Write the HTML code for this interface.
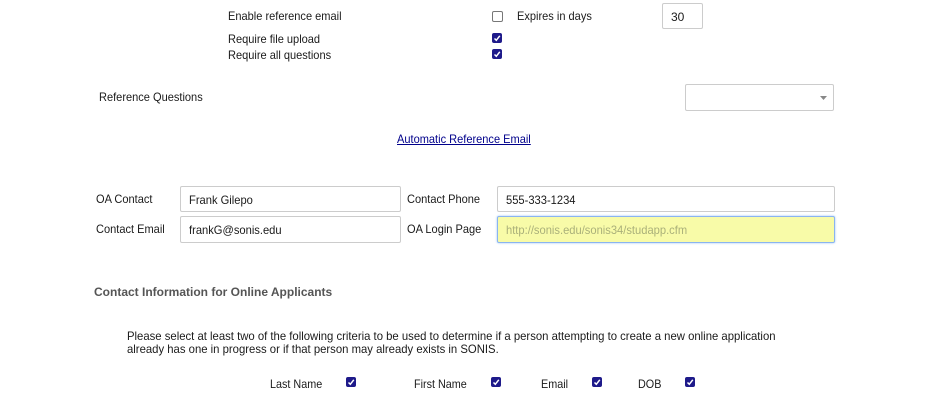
<!DOCTYPE html>
<html><head><style>
body{margin:0;width:936px;height:402px;background:#fff;font-family:"Liberation Sans",Arial,sans-serif;font-size:12px;color:#1a1a1a;position:relative;overflow:hidden}
.a{position:absolute;white-space:nowrap;line-height:14px}
.cb{position:absolute;width:10px;height:10px;background:#1e1a8a;border-radius:2px}
.cb svg{position:absolute;left:1px;top:1px}
.ucb{position:absolute;width:9px;height:9px;border:1px solid #777;border-radius:2px;background:#fff}
.in{position:absolute;border:1px solid #ccc;border-radius:2px;background:#fff;box-sizing:border-box;padding-left:8px;line-height:26px}
.in span{display:inline-block;transform-origin:left center;transform:scaleX(0.93)}
.c{transform-origin:left top;transform:scaleX(0.92)}
.p{transform-origin:left top;transform:scaleX(0.943)}
.b{transform-origin:left top;transform:scaleX(0.9)}
</style></head><body>
<div class="a c" style="left:228px;top:9px">Enable reference email</div>
<div class="ucb" style="left:492px;top:11px"></div>
<div class="a c" style="left:517px;top:9px">Expires in days</div>
<div class="in" style="left:662px;top:3px;width:41px;height:26px">30</div>
<div class="a c" style="left:228px;top:32px">Require file upload</div>
<div class="cb" style="left:492px;top:33px"><svg width="8" height="8"><path d="M1.5 4.5L3.3 6.3L6.8 1.8" stroke="#fff" stroke-width="1.5" fill="none"/></svg></div>
<div class="a c" style="left:228px;top:48px">Require all questions</div>
<div class="cb" style="left:492px;top:49px"><svg width="8" height="8"><path d="M1.5 4.5L3.3 6.3L6.8 1.8" stroke="#fff" stroke-width="1.5" fill="none"/></svg></div>
<div class="a c" style="left:99px;top:90px">Reference Questions</div>
<div class="in" style="left:685px;top:84px;width:149px;height:27px"><svg style="position:absolute;right:5px;top:11px" width="8" height="4"><path d="M0 0H7L3.5 4Z" fill="#888"/></svg></div>
<div class="a c" style="left:397px;top:132px;color:#00008b;text-decoration:underline">Automatic Reference Email</div>
<div class="a c" style="left:96px;top:192px">OA Contact</div>
<div class="in" style="left:180px;top:186px;width:221px;height:26px"><span>Frank Gilepo</span></div>
<div class="a c" style="left:407px;top:192px">Contact Phone</div>
<div class="in" style="left:497px;top:186px;width:338px;height:26px"><span>555-333-1234</span></div>
<div class="a c" style="left:96px;top:222px">Contact Email</div>
<div class="in" style="left:180px;top:216px;width:221px;height:27px"><span>frankG@sonis.edu</span></div>
<div class="a c" style="left:407px;top:222px">OA Login Page</div>
<div class="in" style="left:497px;top:216px;width:338px;height:27px;background:#f8fba8;border-color:#8ab4f0;box-shadow:0 0 2px #9cc3f5;color:#aab07a"><span>http://sonis.edu/sonis34/studapp.cfm</span></div>
<div class="a" style="left:94px;top:285px;font-weight:bold;color:#555">Contact Information for Online Applicants</div>
<div class="a p" style="left:127px;top:329px">Please select at least two of the following criteria to be used to determine if a person attempting to create a new online application</div>
<div class="a p" style="left:127px;top:342px">already has one in progress or if that person may already exists in SONIS.</div>
<div class="a b" style="left:270px;top:377px">Last Name</div>
<div class="cb" style="left:346px;top:377px"><svg width="8" height="8"><path d="M1.5 4.5L3.3 6.3L6.8 1.8" stroke="#fff" stroke-width="1.5" fill="none"/></svg></div>
<div class="a b" style="left:414px;top:377px">First Name</div>
<div class="cb" style="left:491px;top:377px"><svg width="8" height="8"><path d="M1.5 4.5L3.3 6.3L6.8 1.8" stroke="#fff" stroke-width="1.5" fill="none"/></svg></div>
<div class="a b" style="left:541px;top:377px">Email</div>
<div class="cb" style="left:592px;top:377px"><svg width="8" height="8"><path d="M1.5 4.5L3.3 6.3L6.8 1.8" stroke="#fff" stroke-width="1.5" fill="none"/></svg></div>
<div class="a b" style="left:638px;top:377px">DOB</div>
<div class="cb" style="left:685px;top:377px"><svg width="8" height="8"><path d="M1.5 4.5L3.3 6.3L6.8 1.8" stroke="#fff" stroke-width="1.5" fill="none"/></svg></div>
</body></html>
